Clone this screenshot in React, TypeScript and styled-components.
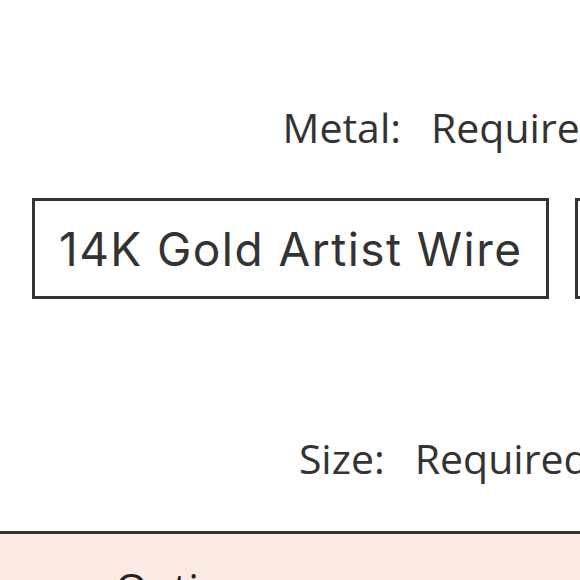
import React from 'react'
import styled, { createGlobalStyle } from 'styled-components'

const GlobalStyle = createGlobalStyle`
  html, body {
    margin: 0;
    padding: 0;
    background: #ffffff;
    overflow: hidden;
  }
  body {
    width: 580px;
    height: 580px;
  }
`

const Page = styled.div`
  width: 580px;
  height: 580px;
  overflow: hidden;
  display: flex;
  flex-direction: column;
  color: #333333;
`

const Field = styled.div<{ $top: number }>`
  padding-top: ${(p) => p.$top}px;
`

const LabelRow = styled.div`
  width: 910px;
  text-align: center;
  font-family: 'Open Sans', 'Noto Sans', sans-serif;
  font-size: 41px;
  line-height: 56px;
  white-space: nowrap;
`

const LabelName = styled.span`
  margin-right: 30px;
`

const Choices = styled.div`
  display: flex;
  gap: 26px;
  margin-top: 43px;
  padding-left: 32px;
`

const Choice = styled.button`
  flex: none;
  box-sizing: border-box;
  height: 101px;
  padding: 0 24px;
  border: 3px solid #333333;
  background: #ffffff;
  color: #333333;
  font-family: 'Inter', 'Lato', sans-serif;
  font-size: 46px;
  letter-spacing: 1.45px;
  white-space: nowrap;
`

const Footer = styled.div`
  margin-top: auto;
  height: 49px;
  border-top: 3px solid #333333;
  background: #fce9e3;
  padding: 33px 0 0 115px;
  box-sizing: border-box;
`

const FooterTitle = styled.h2`
  margin: 0;
  font-family: 'Open Sans', sans-serif;
  font-size: 42px;
  font-weight: 400;
  line-height: 42px;
  color: #222222;
`

export default function App() {
  return (
    <Page>
      <GlobalStyle />
      <Field $top={99}>
        <LabelRow>
          <LabelName>Metal:</LabelName>Required*
        </LabelRow>
      </Field>
      <Choices>
        <Choice>14K Gold Artist Wire</Choice>
        <Choice>Sterling Silver</Choice>
      </Choices>
      <Field $top={131}>
        <LabelRow>
          <LabelName>Size:</LabelName>Required*
        </LabelRow>
      </Field>
      <Footer>
        <FooterTitle>Options</FooterTitle>
      </Footer>
    </Page>
  )
}
